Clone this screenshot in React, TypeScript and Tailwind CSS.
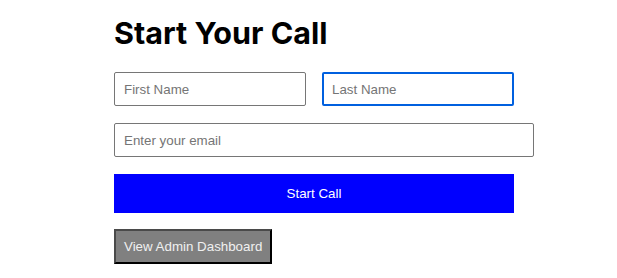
import React from 'react';

export default function App() {
  const [first, setFirst] = React.useState('');
  const [last, setLast] = React.useState('');
  const [email, setEmail] = React.useState('');

  const baseInput =
    "h-[34px] rounded-[2px] text-[13.33px] text-black placeholder:text-[#757575] font-['Liberation_Sans',Arial,sans-serif] outline-none";

  return (
    <div className="min-h-screen bg-white pl-[114px] pt-[14px]">
      {/* Heading */}
      <h1 className="text-[30.5px] leading-[38px] font-bold text-black font-['Inter',sans-serif]">
        Start Your Call
      </h1>

      <div className="mt-[20px] flex gap-[16px]">
        <input
          className={`${baseInput} w-[192px] border border-[#767676] px-[9px]`}
          placeholder="First Name"
          value={first}
          onChange={(e) => setFirst(e.target.value)}
        />
        {/* focused field */}
        <input
          className={`${baseInput} w-[192px] border-2 border-[#0060df] px-[8px]`}
          placeholder="Last Name"
          value={last}
          onChange={(e) => setLast(e.target.value)}
        />
      </div>

      <input
        className={`${baseInput} mt-[17px] block w-[420px] border border-[#767676] px-[9px]`}
        placeholder="Enter your email"
        value={email}
        onChange={(e) => setEmail(e.target.value)}
      />

      <button className="mt-[17px] block h-[39px] w-[400px] bg-[#0000ff] text-white text-[13.33px] font-['Liberation_Sans',Arial,sans-serif]">
        Start Call
      </button>

      <button className="mt-[16px] block h-[35px] px-[8px] bg-[#808080] text-[#f0f0f0] text-[13.33px] font-['Liberation_Sans',Arial,sans-serif] border-2 border-t-[#4a4a4a] border-l-[#4a4a4a] border-b-black border-r-black">
        View Admin Dashboard
      </button>
    </div>
  );
}
